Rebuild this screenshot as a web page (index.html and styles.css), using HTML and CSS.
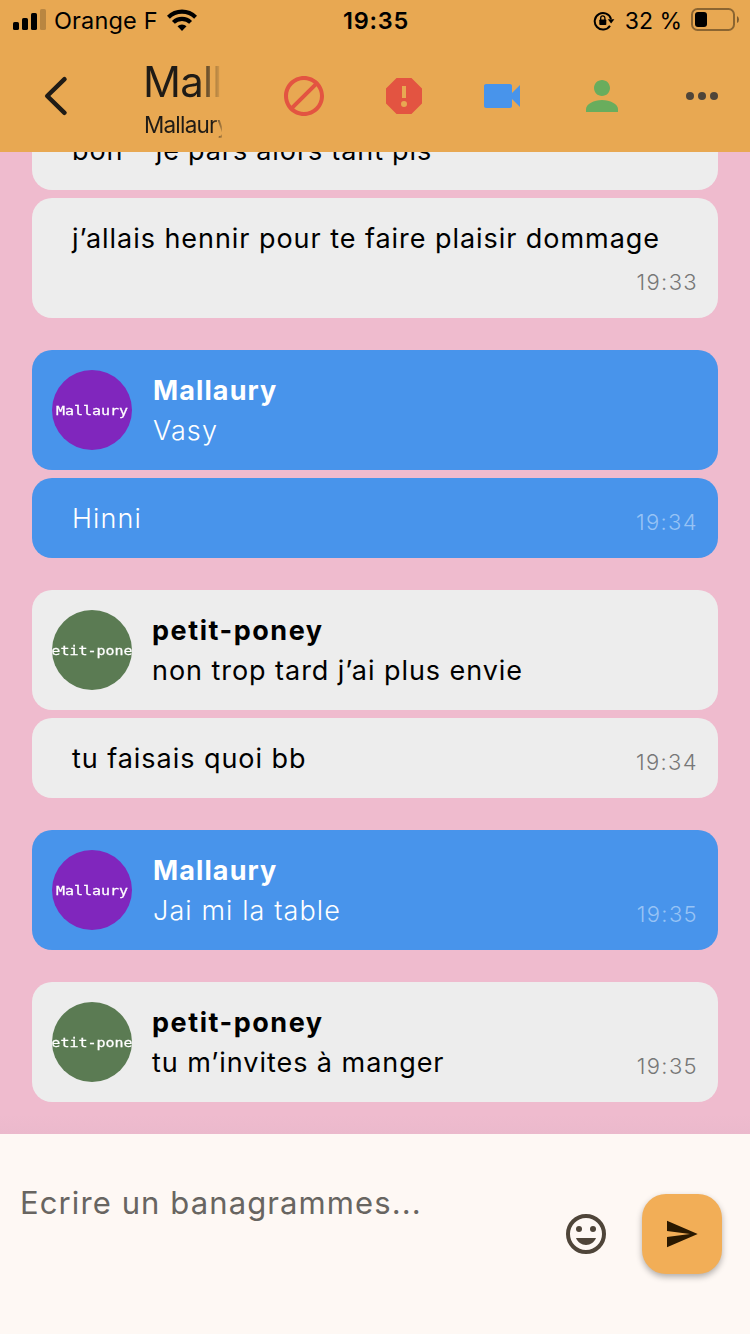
FILE: index.html
```html
<!DOCTYPE html>
<html lang="fr">
<head>
<meta charset="utf-8">
<title>Mallaury</title>
<link rel="stylesheet" href="styles.css">
</head>
<body>
<div class="app">
  <header class="header">
    <div class="status">
      <div class="status-left">
        <svg class="signal" width="34" height="22" viewBox="0 0 34 22">
          <rect x="0" y="13" width="6" height="8" rx="1.6"/><rect x="9" y="9" width="6" height="12" rx="1.6"/><rect x="18" y="4" width="6" height="17" rx="1.6"/><rect x="27" y="0" width="6" height="21" rx="1.6" opacity=".2"/>
        </svg>
        <span class="carrier">Orange F</span>
        <svg class="wifi" width="30" height="22" viewBox="0 0 30 22">
          <g fill="none" stroke="#000" stroke-width="4.1"><path d="M1.4 8.2a19.3 19.3 0 0 1 27.2 0"/><path d="M6.4 13.4a12.2 12.2 0 0 1 17.2 0"/></g>
          <path d="M15 22l-4.500-4.700a6.400 6.400 0 0 1 9 0z"/>
        </svg>
      </div>
      <span class="clock">19:35</span>
      <div class="status-right">
        <svg class="lock" width="22" height="20" viewBox="0 0 22 20">
          <path d="M17 14.800A8.300 8.300 0 1 1 18 8" fill="none" stroke="#000" stroke-width="2"/>
          <path d="M14.800 8.200h6.600L18.100 12.600z"/>
          <rect x="6.300" y="8.500" width="7" height="5.500" rx=".8"/><path d="M7.700 9V7a2.100 2.100 0 0 1 4.200 0v2" fill="none" stroke="#000" stroke-width="1.300"/>
        </svg>
        <span class="percent">32 %</span>
        <svg class="battery" width="48" height="23" viewBox="0 0 48 23">
          <rect x="1" y="1" width="42" height="21" rx="5.500" fill="none" stroke="#000" stroke-opacity=".4" stroke-width="2"/>
          <rect x="4" y="4" width="12" height="15" rx="3"/><path d="M46 8q2 1 2 3.500T46 15z" opacity=".45"/>
        </svg>
      </div>
    </div>
    <div class="toolbar">
      <svg class="back" width="24" height="40" viewBox="0 0 24 40"><path d="M20.500 3.200L3.200 20l17.300 16.800" fill="none" stroke="#1f1b16" stroke-width="4.500" stroke-linecap="round" stroke-linejoin="round"/></svg>
      <div class="heading">
        <div class="title">Mallaury</div>
        <div class="subtitle">Mallaury</div>
      </div>
      <div class="actions">
        <svg class="icon red" viewBox="0 0 24 24"><path d="M12 2C6.480 2 2 6.480 2 12s4.480 10 10 10 10-4.480 10-10S17.520 2 12 2zM4 12c0-4.420 3.580-8 8-8 1.850 0 3.550.63 4.900 1.690L5.690 16.900C4.630 15.550 4 13.850 4 12zm8 8c-1.850 0-3.550-.63-4.900-1.690L18.310 7.100C19.370 8.450 20 10.150 20 12c0 4.420-3.580 8-8 8z"/></svg>
        <svg class="icon red" viewBox="0 0 24 24"><path fill-rule="evenodd" d="M15.730 3H8.270L3 8.270v7.460L8.270 21h7.460L21 15.730V8.270L15.730 3zM12 17.500a1.500 1.500 0 1 1 0-3 1.500 1.500 0 0 1 0 3zM13 13h-2V7h2v6z"/></svg>
        <svg class="icon video" viewBox="0 0 24 24"><path d="M17 10.500V7c0-.55-.45-1-1-1H4c-.55 0-1 .45-1 1v10c0 .55.45 1 1 1h12c.55 0 1-.45 1-1v-3.500l4 4v-11l-4 4z"/></svg>
        <svg class="icon person" viewBox="0 0 24 24"><path d="M12 12c2.210 0 4-1.790 4-4s-1.790-4-4-4-4 1.790-4 4 1.790 4 4 4zm0 2c-4 0-8 2-8 4.500V20h16v-1.500c0-2.500-4-4.500-8-4.500z"/></svg>
        <svg class="icon more" viewBox="0 0 24 24"><circle cx="6" cy="12" r="2"/><circle cx="12" cy="12" r="2"/><circle cx="18" cy="12" r="2"/></svg>
      </div>
    </div>
  </header>

  <main class="thread">
    <section class="group">
      <article class="card light short"><p class="text snug">bon &nbsp;&nbsp; je pars alors tant pis</p></article>
      <article class="card light tall wrap"><p class="text">j’allais hennir pour te faire plaisir dommage</p><time class="time">19:33</time></article>
    </section>
    <section class="group">
      <article class="card blue tall"><div class="avatar purple"><span>Mallaury</span></div><div class="body"><h2 class="name">Mallaury</h2><p class="text">Vasy</p></div></article>
      <article class="card blue short"><p class="text">Hinni</p><time class="time">19:34</time></article>
    </section>
    <section class="group">
      <article class="card light tall"><div class="avatar green"><span>petit-poney</span></div><div class="body"><h2 class="name">petit-poney</h2><p class="text">non trop tard j’ai plus envie</p></div></article>
      <article class="card light short"><p class="text">tu faisais quoi bb</p><time class="time">19:34</time></article>
    </section>
    <section class="group">
      <article class="card blue tall"><div class="avatar purple"><span>Mallaury</span></div><div class="body"><h2 class="name">Mallaury</h2><p class="text">Jai mi la table</p></div><time class="time">19:35</time></article>
    </section>
    <section class="group">
      <article class="card light tall"><div class="avatar green"><span>petit-poney</span></div><div class="body"><h2 class="name">petit-poney</h2><p class="text">tu m’invites à manger</p></div><time class="time">19:35</time></article>
    </section>
  </main>

  <footer class="composer">
    <div class="placeholder">Ecrire un banagrammes...</div>
    <svg class="emoji" width="40" height="40" viewBox="0 0 40 40"><circle cx="20" cy="20" r="18" fill="none" stroke="#4f4539" stroke-width="4"/><circle cx="13" cy="15" r="3"/><circle cx="27" cy="15" r="3"/><path d="M10 24h20c-1.600 4-5.400 7-10 7s-8.400-3-10-7z"/></svg>
    <div class="send"><svg width="32" height="28" viewBox="0 0 32 28"><path d="M1 .7L31.700 14 1 27.300V17l23-3L1 11z"/></svg></div>
  </footer>
</div>
</body>
</html>
```

FILE: styles.css
```css
* { box-sizing: border-box; }
body, p, h2 { margin: 0; }
body { font-family: Inter, "Liberation Sans", sans-serif; }
svg { display: block; flex: none; }

.app { display: flex; flex-direction: column; width: 750px; height: 1334px; overflow: hidden; background: #efbbce; }

.header { flex: none; height: 152px; background: #e8a852; }
.status { display: grid; grid-template-columns: 1fr auto 1fr; height: 40px; padding: 0 11px 0 13px; align-items: center; font-size: 23px; color: #000; }
.status-left, .status-right { display: flex; align-items: center; white-space: pre; }
.status-right { justify-content: flex-end; }
.carrier { margin-left: 7px; padding-top: 1px; font-size: 23.500px; letter-spacing: 0.15px; }
.wifi { margin-left: 9px; }
.clock { padding-top: 1px; font-weight: 600; font-size: 23.500px; letter-spacing: 0.8px; }
.percent { padding-top: 1px; }
.lock { margin-right: 10px; margin-top: 1px; }
.battery { margin-left: 9px; margin-top: -1px; }

.toolbar { display: flex; align-items: center; height: 112px; padding-left: 44px; }
.heading { width: 79px; margin: 5px 0 0 75px; white-space: nowrap; color: #1f1b16; }
.title, .subtitle { overflow: hidden; }
.title { font-size: 42px; line-height: 52px; letter-spacing: -0.8px; -webkit-mask-image: linear-gradient(90deg, #000 70%, transparent); mask-image: linear-gradient(90deg, #000 70%, transparent); }
.subtitle { padding-left: 1px; font-size: 22.500px; line-height: 34px; letter-spacing: -0.8px; -webkit-mask-image: linear-gradient(90deg, #000 88%, rgba(0, 0, 0, .25)); mask-image: linear-gradient(90deg, #000 88%, rgba(0, 0, 0, .25)); }
.actions { display: flex; gap: 52px; margin-left: 58px; }
.icon { width: 48px; height: 48px; }
.red { fill: #e35441; }
.video { fill: #4894eb; margin-left: -2px; }
.person { fill: #69ad5d; }
.more { fill: #4f4539; }

.thread { flex: 1; min-height: 0; display: flex; flex-direction: column; justify-content: flex-end; gap: 32px; padding: 0 32px 32px; overflow: hidden; background: linear-gradient(#efbbce 98%, #ebb9cc); }
.group { display: flex; flex: none; flex-direction: column; gap: 8px; }
.card { display: flex; align-items: flex-end; padding: 20px; border-radius: 20px; }
.short { height: 80px; }
.tall { height: 120px; }
.wrap { flex-wrap: wrap; }
.light { background: #ededed; color: #000; }
.blue { background: #4894eb; color: #fff; }
.card > .text { align-self: flex-start; padding-left: 20px; }
.wrap > .text { width: 100%; }
.text { height: 40px; padding-top: 1px; font-size: 27px; line-height: 40px; letter-spacing: 0.95px; white-space: nowrap; }
.text.snug { word-spacing: -0.5px; }
.blue .text { font-weight: 300; letter-spacing: 1.1px; }
.name { height: 40px; padding-top: 1px; font-size: 27px; line-height: 40px; font-weight: 700; letter-spacing: 1.1px; }
.light .name { letter-spacing: 1.55px; }
.body { margin-left: 20px; }
.blue .body { margin-left: 21px; }
.time { margin-left: auto; font-size: 22px; line-height: 32px; font-weight: 300; letter-spacing: 1.35px; color: #777; }
.blue .time { color: #97c3f5; }
.avatar { display: flex; flex: none; align-items: center; justify-content: center; width: 80px; height: 80px; border-radius: 50%; overflow: hidden; color: #fff; font: 15px/20px "DejaVu Sans Mono", monospace; white-space: nowrap; }
.avatar span { flex: none; padding-top: 1px; transform: scaleY(.86); -webkit-text-stroke: 0.3px #fff; }
.purple { background: #8026bd; }
.green { background: #5b7b53; }

.composer { display: flex; flex: none; align-items: flex-start; height: 200px; background: #fef8f4; }
.placeholder { flex: 1; padding: 49px 0 0 20px; font-size: 31px; line-height: 40px; letter-spacing: 1.1px; color: #686561; }
.emoji { margin-top: 80px; fill: #4f4539; }
.send { display: flex; align-items: center; justify-content: center; width: 80px; height: 80px; margin: 60px 28px 0 36px; border-radius: 24px; background: #f2ae57; fill: #291800; box-shadow: 0 3px 6px rgba(0, 0, 0, .3); }
```
